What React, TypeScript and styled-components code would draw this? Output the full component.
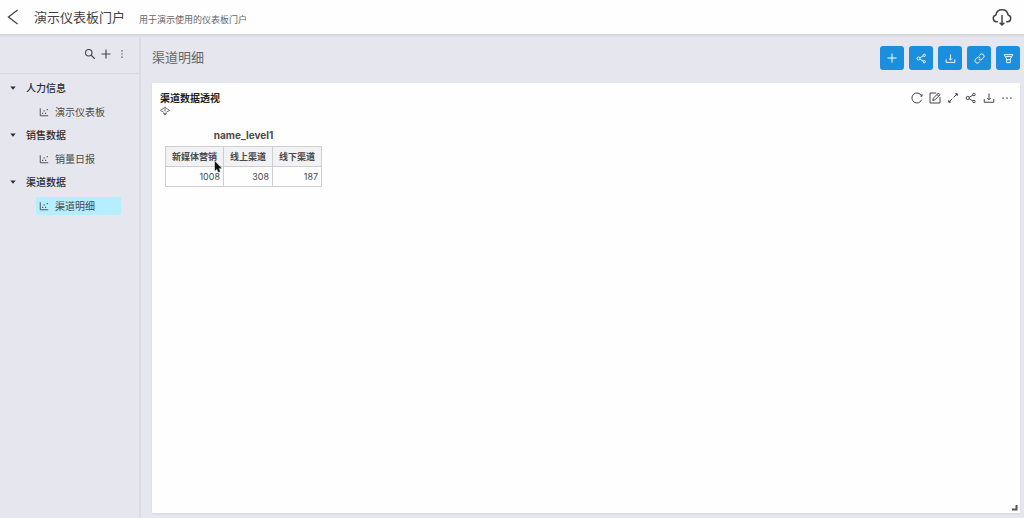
import React from 'react';
import styled, { createGlobalStyle } from 'styled-components';

const GlobalStyle = createGlobalStyle`
  * { box-sizing: border-box; }
  body {
    margin: 0;
    background: #e6e7ee;
    color: #333;
    font-family: Inter, "Noto Sans CJK SC", sans-serif;
    font-size: 10px;
    line-height: 16px;
  }
  button { font: inherit; color: inherit; background: none; border: 0; padding: 0; cursor: pointer; }
  h1, h2, h3, p, ul { margin: 0; padding: 0; font-weight: 400; }
  ul { list-style: none; }
`;

const Page = styled.div`
  min-height: 100vh;
  display: flex;
  flex-direction: column;
`;

const TopBar = styled.header`
  display: flex;
  align-items: center;
  height: 35px;
  padding: 0 12px 0 3px;
  background: #fefefe;
  border-bottom: 1px solid #d3d5da;
  box-shadow: 0 1px 2px rgba(0, 0, 0, 0.08);
`;

const PortalTitle = styled.h1`
  margin-left: 11px;
  font-size: 13px;
  line-height: 20px;
  color: #404040;
`;

const PortalNote = styled.p`
  flex: 1;
  margin-left: 14px;
  padding-top: 5px;
  font-size: 9px;
  color: #666;
`;

const Body = styled.div`
  flex: 1;
  display: flex;
`;

const Sidebar = styled.aside`
  width: 141px;
  flex: none;
  border-right: 2px solid #dcdde2;
`;

const SideTools = styled.div`
  display: flex;
  justify-content: flex-end;
  align-items: center;
  gap: 4px;
  height: 39px;
  padding: 0 11px 1px 0;
  border-bottom: 1px solid #d8d9df;
`;

const IconButton = styled.button<{ $wide?: boolean }>`
  display: flex;
  align-items: center;
  justify-content: center;
  width: ${(p) => (p.$wide ? '20px' : '12px')};
  height: ${(p) => (p.$wide ? '20px' : '16px')};
  color: #444;
`;

const Tree = styled.ul`
  padding-top: 2px;
`;

const GroupButton = styled.button`
  display: flex;
  align-items: center;
  gap: 9px;
  height: 24px;
  padding-left: 9px;
  font-weight: 500;
  color: #2c2c2c;
`;

const Leaf = styled.a<{ $active?: boolean }>`
  display: flex;
  align-items: center;
  gap: 6px;
  height: 18px;
  margin: 3px 18px 2px 36px;
  padding-left: 3px;
  border-radius: 2px;
  color: #484848;
  text-decoration: none;
  background: ${(p) => (p.$active ? '#b6edff' : 'transparent')};
`;

const Main = styled.main`
  flex: 1;
  min-width: 0;
  display: flex;
  flex-direction: column;
  padding: 0 4px 5px 11px;
`;

const MainHead = styled.div`
  display: flex;
  align-items: center;
  justify-content: space-between;
  height: 48px;
  padding-bottom: 2px;
`;

const MainTitle = styled.h2`
  padding-bottom: 2px;
  font-size: 13px;
  line-height: 20px;
  color: #666;
`;

const Actions = styled.div`
  display: flex;
  gap: 5px;
`;

const ActionButton = styled.button`
  display: flex;
  align-items: center;
  justify-content: center;
  width: 24px;
  height: 24px;
  border-radius: 3px;
  background: #1b8fdd;
  color: #fff;
`;

const Card = styled.section`
  position: relative;
  flex: 1;
  padding: 7px 7px 20px 8px;
  border-radius: 1px;
  background: #fefefe;
  box-shadow: 0 1px 2px rgba(0, 0, 0, 0.08);
`;

const CardHead = styled.div`
  display: flex;
  align-items: center;
  justify-content: space-between;
  height: 16px;
`;

const CardTitle = styled.h3`
  font-size: 10px;
  font-weight: 700;
  color: #1f1f1f;
`;

const CardTools = styled.div`
  display: flex;
  gap: 6px;
`;

const Marker = styled.div`
  display: flex;
  height: 11px;
  color: #555;
`;

const Pivot = styled.table`
  margin: 10px 0 0 5px;
  border-collapse: collapse;
  font-size: 9px;
  color: #4a4a4a;
  caption {
    height: 19px;
    font-size: 10px;
    font-weight: 700;
  }
  th, td {
    height: 20px;
    padding: 0 3px 0 6px;
    border: 1px solid #cfcfcf;
    line-height: 18px;
  }
  th {
    padding: 0 6px;
    background: #f2f2f4;
    font-weight: 700;
  }
  td { text-align: right; }
`;

const Anchor = styled.span`
  position: relative;
`;

const Pointer = styled.svg`
  position: absolute;
  left: 15px;
  top: -10px;
`;

const Grip = styled.svg`
  position: absolute;
  right: 2px;
  bottom: 2px;
`;

const paths = {
  back: <path d="M17.500 3.500 6.500 12l11 8.500" />,
  cloud: (
    <>
      <path d="M7 17.800H5.200a4.200 4.200 0 0 1-.6-8.200C5.200 5.700 8.200 3.200 12 3.200s6.800 2.500 7.400 6.400a4.200 4.200 0 0 1-.6 8.200H17" />
      <path d="M12 9.500v12M9.200 18.800 12 21.600l2.800-2.800" />
    </>
  ),
  search: (
    <>
      <circle cx="9.500" cy="9.500" r="6.500" />
      <path d="m14.500 14.500 7 7" />
    </>
  ),
  plus: <path d="M12 3v18M3 12h18" />,
  more: <path d="M12 3v2.800M12 10.600v2.800M12 18.200V21" />,
  dots: <path d="M1 12h3.500M10.300 12h3.500M19.500 12H23" />,
  caret: <path d="M4 7.500h16L12 17z" fill="currentColor" stroke="none" />,
  chart: (
    <>
      <path d="M3 3v18h19" />
      <path d="M7.500 15.500h2.600M11 9.500h2.600M14.500 15h2.600M18.500 6.500h2.600" strokeWidth="3" />
    </>
  ),
  share: (
    <>
      <circle cx="5.500" cy="12" r="3.200" />
      <circle cx="18" cy="5" r="2.500" />
      <circle cx="18" cy="19" r="2.500" />
      <path d="m8.500 10.500 7.300-4.200M8.500 13.500l7.300 4.200" />
    </>
  ),
  download: (
    <>
      <path d="M12 3v12M8.500 12l3.500 3.500 3.500-3.500" />
      <path d="M2.500 14v6.500h19V14" />
    </>
  ),
  link: (
    <>
      <path d="M10 13a5 5 0 0 0 7.540.54l3-3a5 5 0 0 0-7.070-7.070l-1.720 1.710" />
      <path d="M14 11a5 5 0 0 0-7.540-.54l-3 3a5 5 0 0 0 7.070 7.070l1.710-1.710" />
    </>
  ),
  filter: (
    <>
      <path d="M2.500 3.500h19L16 13v8H8v-8z" />
      <path d="M8 14.500h8M6 7.500h12" />
    </>
  ),
  reload: (
    <>
      <path d="M21.200 15.500A10 10 0 1 1 20.800 7.500" />
      <path d="M22 4v4.500h-3" />
    </>
  ),
  edit: (
    <>
      <path d="M14.500 2H2v20h20V10" />
      <path d="m7.500 17 1.200-4.700L18.700 2.200l3.300 3.300-10 10.200zM16 5l3.200 3.200" />
    </>
  ),
  expand: (
    <>
      <path d="m13.500 10.500 6-6M10.500 13.500l-6 6" />
      <path d="M17 3.500h3.500V7zM3.500 17v3.500H7z" fill="currentColor" />
    </>
  ),
  control: (
    <>
      <path d="M8 6 1 10.500 9 15M16 6l7 4.500L15 15" />
      <path d="M8 6.500 12 2l4 4.500M12 5v8M8.500 17.500 12 22l3.500-4.500z" />
    </>
  ),
};

type IconName = keyof typeof paths;
type IconProps = { name: IconName; size?: number; weight?: number };

const Drawing = styled.svg`
  flex: none;
`;

function Icon({ name, size = 12, weight = 2 }: IconProps) {
  return (
    <Drawing
      width={size}
      height={size}
      viewBox="0 0 24 24"
      fill="none"
      stroke="currentColor"
      strokeWidth={weight}
      aria-hidden="true"
    >
      {paths[name]}
    </Drawing>
  );
}

const groups = [
  { name: '人力信息', item: '演示仪表板' },
  { name: '销售数据', item: '销量日报' },
  { name: '渠道数据', item: '渠道明细', active: true },
];

const actions: { icon: IconName; label: string; size: number }[] = [
  { icon: 'plus', label: '新增', size: 12 },
  { icon: 'share', label: '分享', size: 11 },
  { icon: 'download', label: '下载', size: 11 },
  { icon: 'link', label: '联动', size: 11 },
  { icon: 'filter', label: '筛选', size: 11 },
];

const cardTools: { icon: IconName; label: string }[] = [
  { icon: 'reload', label: '刷新' },
  { icon: 'edit', label: '编辑' },
  { icon: 'expand', label: '全屏' },
  { icon: 'share', label: '分享' },
  { icon: 'download', label: '下载' },
  { icon: 'dots', label: '更多' },
];

export default function App() {
  return (
    <Page>
      <GlobalStyle />
      <TopBar>
        <IconButton $wide aria-label="返回">
          <Icon name="back" size={20} weight={1.5} />
        </IconButton>
        <PortalTitle>演示仪表板门户</PortalTitle>
        <PortalNote>用于演示使用的仪表板门户</PortalNote>
        <IconButton $wide aria-label="下载列表">
          <Icon name="cloud" size={20} weight={1.8} />
        </IconButton>
      </TopBar>
      <Body>
        <Sidebar>
          <SideTools>
            <IconButton aria-label="搜索"><Icon name="search" size={12} weight={2.2} /></IconButton>
            <IconButton aria-label="新增"><Icon name="plus" size={12} weight={2.2} /></IconButton>
            <IconButton aria-label="更多"><Icon name="more" size={10} weight={3} /></IconButton>
          </SideTools>
          <Tree>
            {groups.map((g) => (
              <li key={g.name}>
                <GroupButton aria-expanded="true">
                  <Icon name="caret" size={8} />
                  {g.name}
                </GroupButton>
                <Leaf href="#" $active={g.active}>
                  <Icon name="chart" size={10} weight={2.2} />
                  {g.item}
                </Leaf>
              </li>
            ))}
          </Tree>
        </Sidebar>
        <Main>
          <MainHead>
            <MainTitle>渠道明细</MainTitle>
            <Actions>
              {actions.map((a) => (
                <ActionButton key={a.icon} aria-label={a.label}>
                  <Icon name={a.icon} size={a.size} />
                </ActionButton>
              ))}
            </Actions>
          </MainHead>
          <Card>
            <CardHead>
              <CardTitle>渠道数据透视</CardTitle>
              <CardTools>
                {cardTools.map((t) => (
                  <IconButton key={t.icon} aria-label={t.label}>
                    <Icon
                      name={t.icon}
                      size={t.icon === 'dots' ? 10 : 12}
                      weight={t.icon === 'dots' ? 3 : 2}
                    />
                  </IconButton>
                ))}
              </CardTools>
            </CardHead>
            <Marker><Icon name="control" size={10} weight={2} /></Marker>
            <Pivot>
              <caption>name_level1</caption>
              <thead>
                <tr>
                  <th scope="col">新媒体营销</th>
                  <th scope="col">线上渠道</th>
                  <th scope="col">线下渠道</th>
                </tr>
              </thead>
              <tbody>
                <tr>
                  <td>
                    <Anchor>
                      1008
                      <Pointer width="8" height="12" viewBox="0 0 8 12" aria-hidden="true">
                        <path
                          d="M1 .5v9l2-1.800 1.400 3.400 1.600-.7L4.600 7.200h2.800z"
                          fill="#111"
                          stroke="#111"
                          strokeWidth=".4"
                        />
                      </Pointer>
                    </Anchor>
                  </td>
                  <td>308</td>
                  <td>187</td>
                </tr>
              </tbody>
            </Pivot>
            <Grip width="6" height="6" viewBox="0 0 6 6" aria-hidden="true">
              <path d="M4.500 0v4.500H0" fill="none" stroke="#555" strokeWidth="2" />
            </Grip>
          </Card>
        </Main>
      </Body>
    </Page>
  );
}
